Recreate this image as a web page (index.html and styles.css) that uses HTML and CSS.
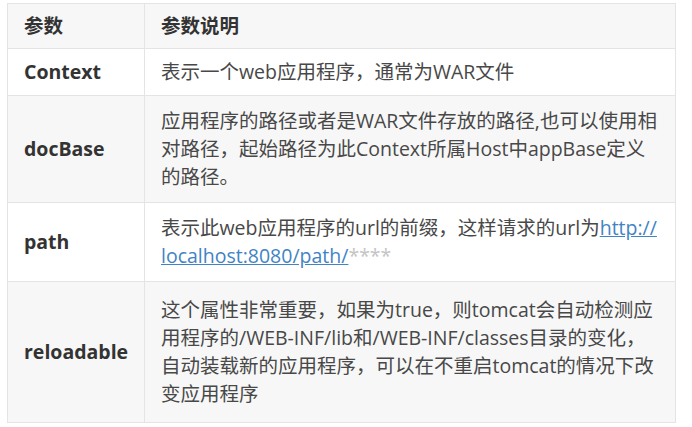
FILE: index.html
```html
<!DOCTYPE html>
<html lang="zh-CN">
<head>
    <meta charset="UTF-8">
    <meta name="viewport" content="width=device-width, initial-scale=1.0">
    <title>Context 参数</title>
    <link rel="stylesheet" href="styles.css">
</head>
<body>
    <table class="param-table">
        <thead>
            <tr>
                <th class="col-name">参数</th>
                <th>参数说明</th>
            </tr>
        </thead>
        <tbody>
            <tr class="row-context">
                <td class="col-name">Context</td>
                <td>表示一个web应用程序，通常为WAR文件</td>
            </tr>
            <tr class="row-docbase">
                <td class="col-name">docBase</td>
                <td>应用程序的路径或者是WAR文件存放的路径,也可以使用相对路径，起始路径为此Context所属Host中appBase定义的路径。</td>
            </tr>
            <tr class="row-path">
                <td class="col-name">path</td>
                <td>表示此web应用程序的url的前缀，这样请求的url为<a href="#">http://<br>localhost:8080/path/</a><span class="muted">****</span></td>
            </tr>
            <tr class="row-reload">
                <td class="col-name">reloadable</td>
                <td>这个属性非常重要，如果为true，则tomcat会自动检测应用程序的/WEB-INF/lib和/WEB-INF/classes目录的变化，自动装载新的应用程序，可以在不重启tomcat的情况下改变应用程序</td>
            </tr>
        </tbody>
    </table>
</body>
</html>
```

FILE: styles.css
```css
* {
    box-sizing: border-box;
    margin: 0;
    padding: 0;
}

body {
    font-family: "Open Sans", "Noto Sans CJK SC", sans-serif;
    font-size: 19.5px;
    line-height: 28px;
    color: #484848;
    background: #fff;
    padding: 3px 0 0 7px;
}

.param-table {
    width: 669px;
    border-collapse: collapse;
    table-layout: fixed;
}

.param-table th,
.param-table td {
    border: 1px solid #e4e4e4;
    padding: 11px 14px 11px 16px;
    text-align: left;
    vertical-align: middle;
}

.param-table th {
    font-weight: bold;
    color: #333;
    background: #f7f7f7;
    padding-top: 8px;
    padding-bottom: 8px;
}

.param-table .col-name {
    width: 137px;
    font-weight: bold;
    color: #333;
}

.row-context td {
    padding-top: 9px;
    padding-bottom: 9px;
}

.row-docbase td,
.row-reload td {
    background: #f7f7f7;
}

.row-reload td {
    padding-top: 14px;
    padding-bottom: 14px;
}

a {
    color: #4183c4;
    text-decoration: underline;
}

.muted {
    color: #c4c4c4;
}
```
